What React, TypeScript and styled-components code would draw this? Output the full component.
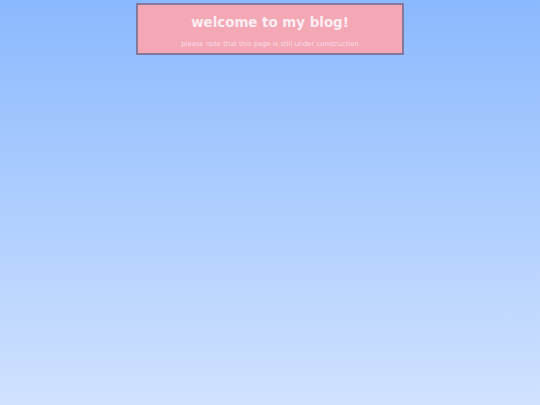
import styled, { createGlobalStyle } from 'styled-components';

const GlobalStyle = createGlobalStyle`
  html, body {
    margin: 0;
    padding: 0;
    height: 100%;
  }
  body {
    background: linear-gradient(to bottom, #8bb9fe 0%, #d0e2ff 100%);
    font-family: "DejaVu Sans", Verdana, sans-serif;
  }
  #root {
    min-height: 100%;
  }
`;

export default function App() {
  return (
    <>
      <GlobalStyle />
      <Page>
        <Banner>
          <Title>welcome to my blog!</Title>
          <Note>please note that this page is still under construction</Note>
        </Banner>
      </Page>
    </>
  );
}

const Page = styled.div`
  display: flex;
  justify-content: center;
  padding-top: 3px;
  height: 405px;
  box-sizing: border-box;
`;
const Banner = styled.header`
  width: 268px;
  height: 52px;
  box-sizing: border-box;
  background: #f4a8b6;
  border: 2px solid #857a9c;
  display: flex;
  flex-direction: column;
  align-items: center;
  padding-top: 9px;
`;
const Title = styled.h1`
  margin: 0;
  font-size: 13.4px;
  font-weight: bold;
  color: #fdeef2;
  line-height: 17px;
`;
const Note = styled.p`
  margin: 9px 0 0;
  font-size: 6.8px;
  color: #fbdde4;
  line-height: 8px;
`;
